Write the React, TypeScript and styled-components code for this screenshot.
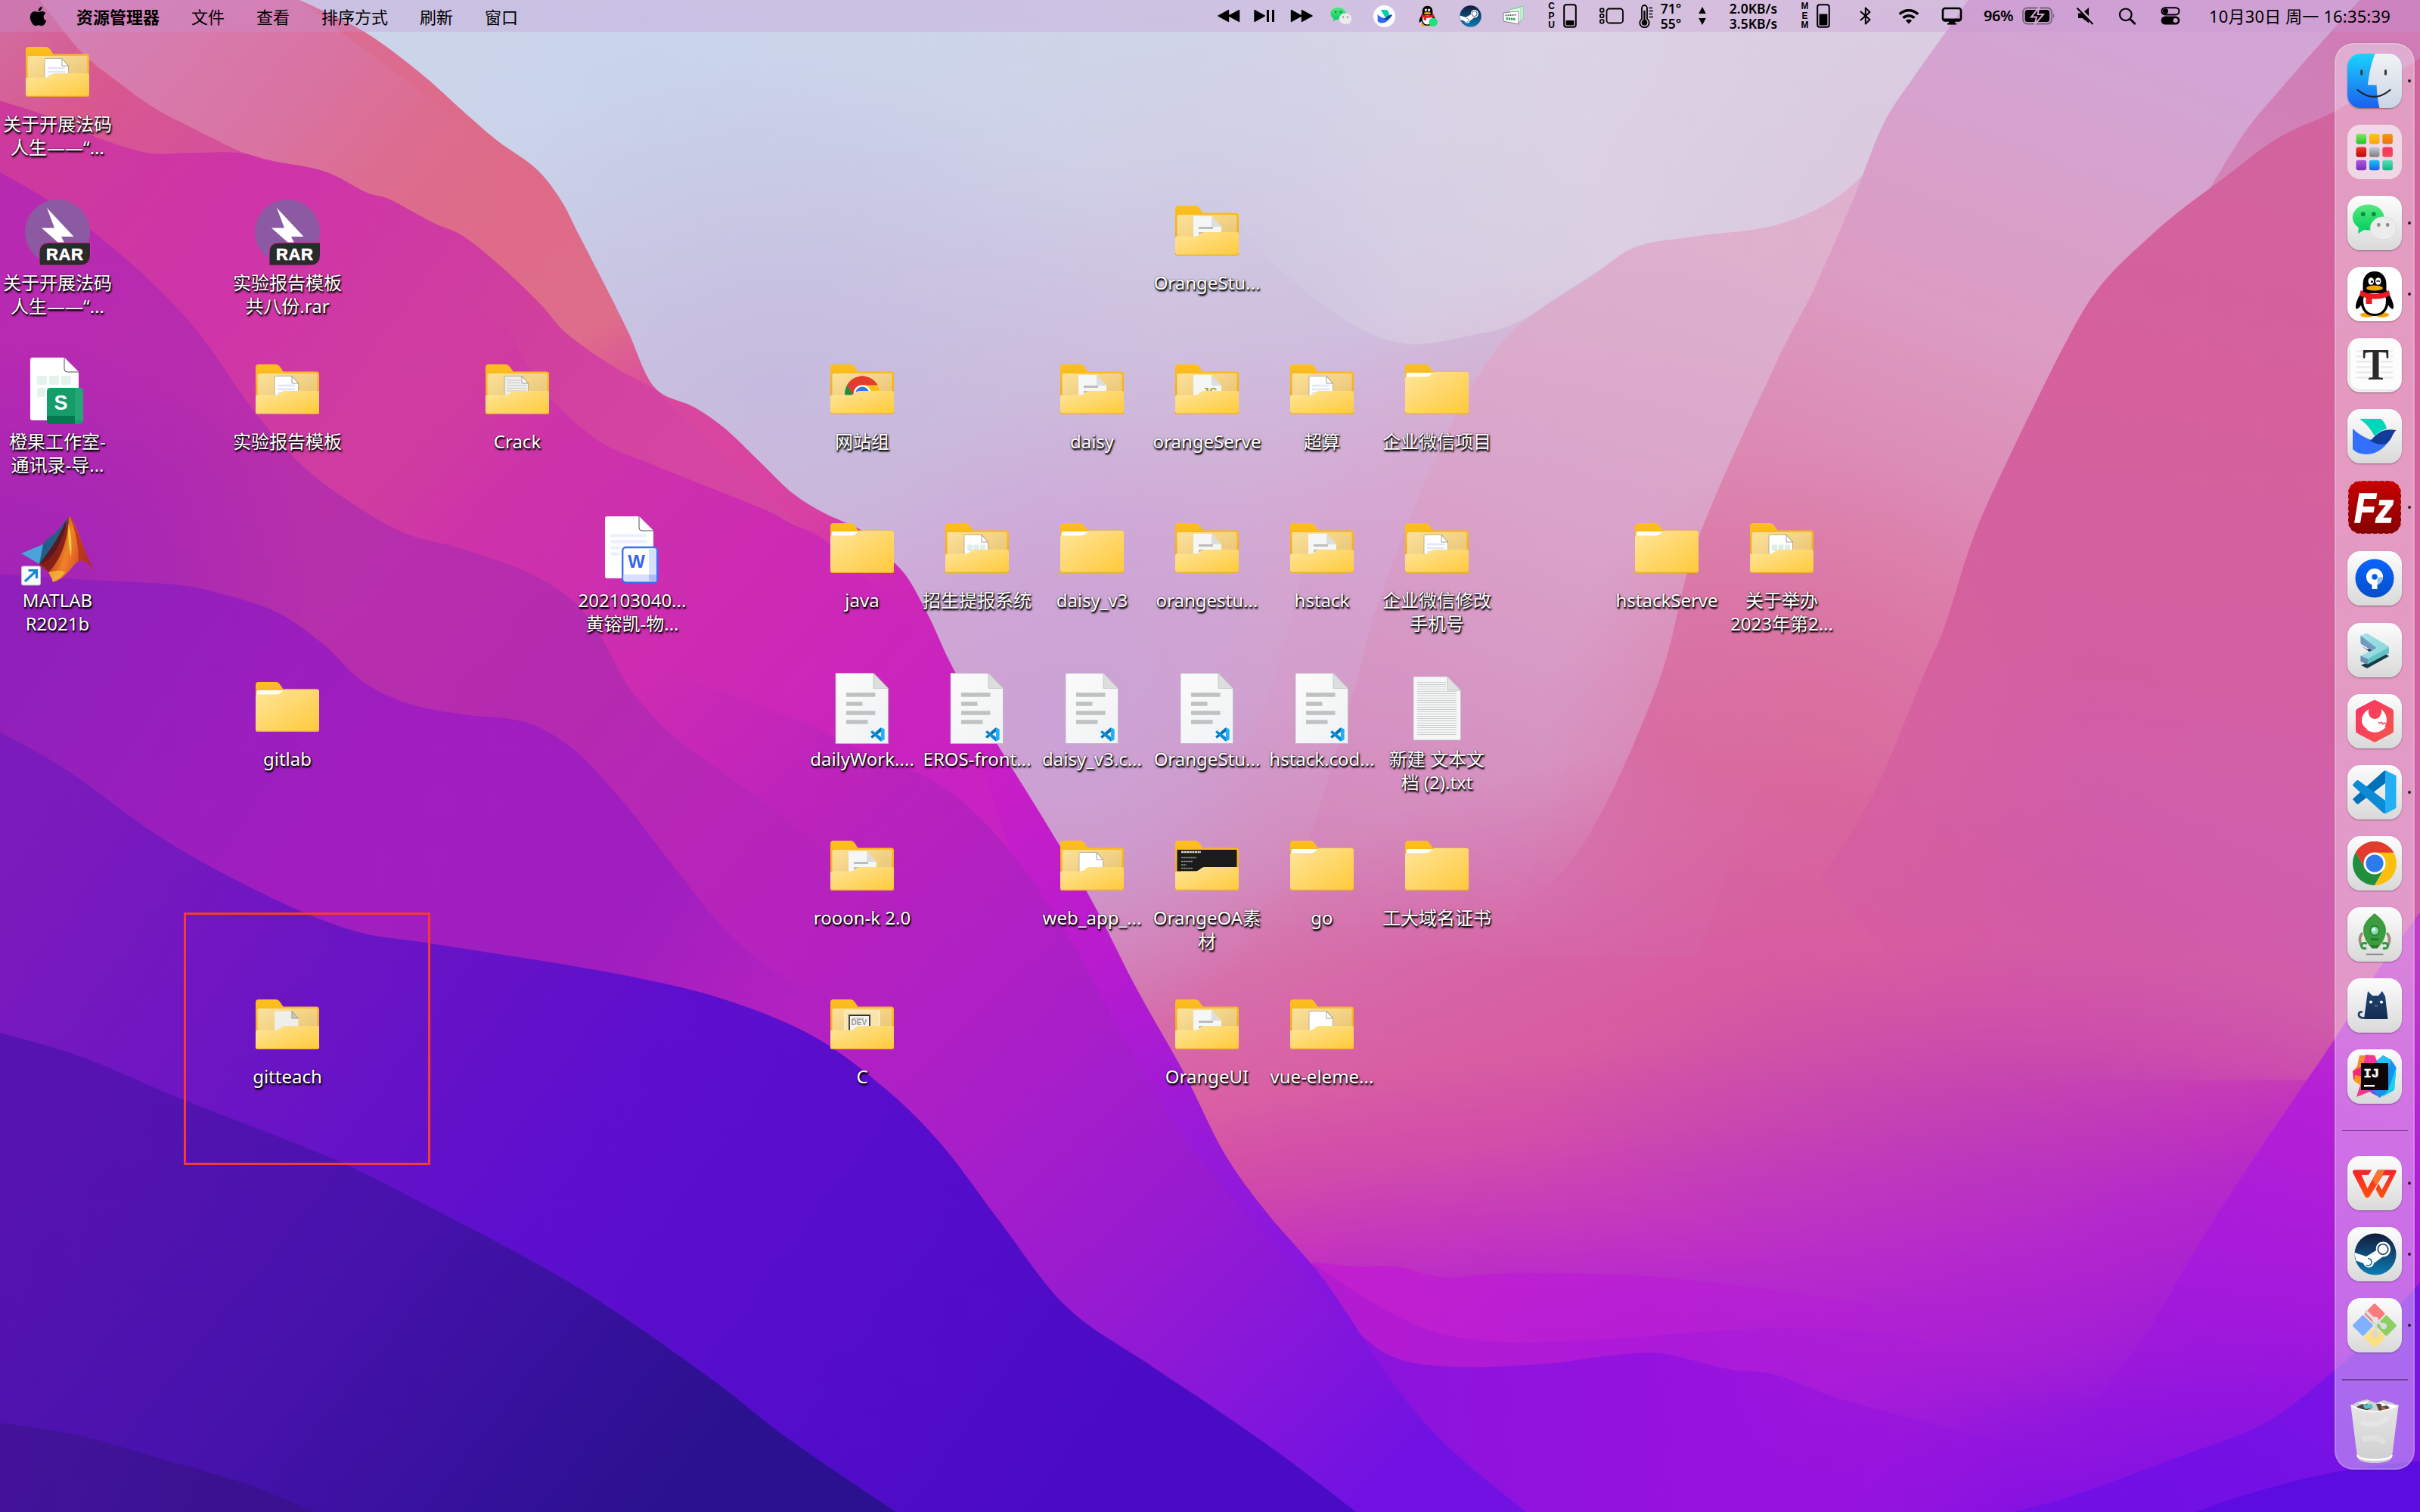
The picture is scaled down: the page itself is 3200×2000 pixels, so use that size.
import React from "react";
import styled, { createGlobalStyle, css } from "styled-components";
import { FaApple } from "react-icons/fa";

/* ------------------------------------------------------------------ */
/* Base                                                                */
/* ------------------------------------------------------------------ */

const uiFont = `"Noto Sans", "Open Sans", "Noto Sans CJK SC", sans-serif`;

const GlobalStyle = createGlobalStyle`
  html, body { margin: 0; padding: 0; background: #5a10c8; }
  body { overflow: hidden; font-family: ${uiFont}; }
  svg { display: block; }
`;

const Screen = styled.div`
  position: relative;
  width: 3200px;
  height: 2000px;
  overflow: hidden;
  display: flex;
  flex-direction: column;
`;

/* ------------------------------------------------------------------ */
/* Wallpaper                                                           */
/* ------------------------------------------------------------------ */

type Pt = [number, number];

/** Catmull-Rom spline through the points, closed by the given tail. */
const ridge = (p: Pt[], tail = "") => {
  let d = `M${p[0][0]},${p[0][1]}`;
  for (let i = 0; i < p.length - 1; i++) {
    const a = p[i - 1] || p[i];
    const b = p[i];
    const c = p[i + 1];
    const e = p[i + 2] || c;
    d += `C${b[0] + (c[0] - a[0]) / 6},${b[1] + (c[1] - a[1]) / 6} ${c[0] - (e[0] - b[0]) / 6},${
      c[1] - (e[1] - b[1]) / 6
    } ${c[0]},${c[1]}`;
  }
  return d + tail + "Z";
};

const WallpaperSvg = styled.svg`
  position: absolute;
  inset: 0;
  width: 100%;
  height: 100%;
`;

type Stop = [number, string, number?];
const Lin = ({ id, v, stops }: { id: string; v: [number, number, number, number]; stops: Stop[] }) => (
  <linearGradient id={id} gradientUnits="userSpaceOnUse" x1={v[0]} y1={v[1]} x2={v[2]} y2={v[3]}>
    {stops.map(([o, c, a], i) => (
      <stop key={i} offset={o} stopColor={c} stopOpacity={a ?? 1} />
    ))}
  </linearGradient>
);
const Glow = ({ id, c, a = 1 }: { id: string; c: string; a?: number }) => (
  <radialGradient id={id}>
    <stop offset="0" stopColor={c} stopOpacity={a} />
    <stop offset=".5" stopColor={c} stopOpacity={a * 0.55} />
    <stop offset="1" stopColor={c} stopOpacity="0" />
  </radialGradient>
);

const massif: Pt[] = [
  [192, -1], [235, 20], [272, 47], [300, 72], [322, 91], [347, 109], [363, 129], [375, 152], [392, 185],
  [407, 215], [424, 251], [450, 264], [470, 278], [492, 299], [514, 320], [533, 332], [546, 338], [560, 345], [571, 357],
  [587, 373], [602, 400], [618, 434], [646, 482], [675, 529], [707, 583], [736, 640], [767, 695], [793, 747],
  [820, 785], [852, 822], [872, 850], [894, 884], [920, 918], [948, 946], [990, 981],
];
const pinkVeil: Pt[] = [[25, -1], [52, 33], [75, 52], [100, 70], [125, 83], [160, 100], [176, 104]];
const hillTwo: Pt[] = [
  [-1, 65], [30, 75], [60, 88], [95, 99], [125, 99], [155, 99], [175, 104], [210, 111], [238, 125], [252, 129],
  [280, 144], [300, 153], [325, 173], [350, 197], [367, 216], [395, 236], [424, 252],
];
const hillThree: Pt[] = [
  [330, 215], [345, 242], [360, 262], [390, 287], [420, 300], [470, 320], [497, 331], [514, 340], [533, 349], [557, 371],
  [580, 390], [600, 415], [618, 438],
];
const hillFour: Pt[] = [
  [-1, 111], [30, 129], [60, 150], [95, 180], [129, 216], [162, 263], [192, 298], [222, 322], [261, 345],
  [300, 356], [342, 371], [372, 390], [390, 414], [408, 446], [435, 476], [470, 502], [510, 532], [560, 575], [620, 640],
];
const hillOuter: Pt[] = [
  [400, 420], [460, 446], [520, 468], [558, 486], [611, 510], [654, 551], [696, 613], [733, 682], [771, 743], [825, 806],
  [860, 844], [892, 884], [920, 919], [948, 947], [990, 981],
];
const hillFive: Pt[] = [
  [-1, 372], [60, 376], [114, 379], [144, 385], [180, 397], [210, 418], [234, 441], [264, 456], [300, 463], [340, 468],
  [372, 486], [404, 520], [436, 561], [473, 606], [510, 634], [560, 652],
];
const hillSix: Pt[] = [
  [-1, 474], [43, 499], [106, 544], [170, 579], [228, 603], [276, 611], [340, 621], [404, 632], [467, 647],
  [526, 671], [574, 706], [611, 743], [648, 792], [691, 847], [744, 884], [786, 912], [833, 945], [880, 981],
];
const hillSeven: Pt[] = [
  [-1, 669], [53, 685], [117, 712], [213, 750], [276, 781], [372, 833], [457, 891], [510, 932], [582, 981],
];
const hillEight: Pt[] = [[-1, 922], [50, 930], [106, 946], [160, 962], [207, 981]];

const slopeC: Pt[] = [
  [1276, -1], [1262, 19], [1240, 50], [1220, 81], [1200, 131], [1175, 188], [1150, 237], [1100, 350], [1075, 441],
  [1032, 537], [990, 590], [953, 633], [920, 700],
];
const slopeD: Pt[] = [
  [1225, 95], [1190, 128], [1150, 146], [1100, 153], [1060, 160], [1030, 180], [985, 210], [960, 240], [938, 280], [912, 340],
  [890, 400], [879, 441], [862, 500], [849, 544], [830, 620],
];
const slopeE: Pt[] = [[965, 235], [900, 262], [870, 310], [848, 360], [825, 441], [805, 490], [788, 537], [770, 600]];
const paleFold: Pt[] = [[740, -1], [760, 60], [800, 140], [850, 192], [905, 222], [960, 216], [985, 208], [1010, 192], [1060, 160]];
const slopeB: Pt[] = [
  [1569, 37], [1540, 56], [1513, 72], [1475, 90], [1440, 116], [1412, 137], [1390, 156], [1362, 184], [1340, 219], [1300, 300],
  [1278, 350], [1260, 406], [1245, 441], [1215, 512], [1180, 570],
];
const slopeTop: Pt[] = [[1530, -1], [1509, 22], [1480, 55], [1455, 85], [1432, 122]];
const rightPurple: Pt[] = [
  [1569, 590], [1540, 630], [1513, 673], [1479, 723], [1447, 771], [1421, 812], [1390, 865], [1340, 930],
];
const rightBlue: Pt[] = [[1569, 830], [1540, 862], [1513, 888], [1468, 922], [1415, 943], [1341, 970], [1300, 981]];
const bandOne: Pt[] = [
  [850, 818], [880, 821], [905, 821], [937, 828], [980, 825], [1065, 827], [1150, 836], [1213, 845], [1300, 850],
];
const bandTwo: Pt[] = [
  [851, 819], [894, 847], [932, 864], [980, 870], [1054, 867], [1139, 861], [1213, 863], [1300, 880],
];
const bandThree: Pt[] = [
  [860, 840], [885, 868], [910, 882], [948, 886], [1001, 884], [1040, 879], [1075, 877], [1118, 887], [1150, 891], [1187, 905],
  [1234, 918], [1300, 935], [1380, 955],
];

const Wallpaper = () => (
  <WallpaperSvg viewBox="0 0 1568 980" preserveAspectRatio="none">
    <defs>
      <Lin id="sky" v={[760, 0, 900, 980]} stops={[
        [0, "#d0d6e9"], [0.1, "#d0cfe6"], [0.22, "#cfc0de"], [0.34, "#d2abd5"], [0.46, "#d19fcc"], [0.56, "#d38abb"], [0.64, "#d670ab"],
        [0.72, "#d95fa4"], [0.77, "#d24ca8"], [0.82, "#c634bb"], [0.87, "#b422d0"], [0.93, "#9a16da"], [1, "#8411e2"],
      ]} />
      <Glow id="gBlue" c="#c8d3ea" a={0.95} />
      <Glow id="gLav" c="#c4b9de" a={0.8} />
      <Glow id="gLilac" c="#cba3d8" a={0.9} />
      <Glow id="gRose" c="#dda0c6" a={0.75} />
      <Glow id="gPink" c="#d6599f" a={0.85} />
      <Glow id="gCoral" c="#dc6896" a={0.6} />
      <Glow id="gMag" c="#b828cf" a={0.7} />
      <Glow id="gHot" c="#d04cae" a={0.7} />
      <Glow id="gOrchid" c="#b332c2" a={0.6} />
      <Glow id="gDusk" c="#9c21b9" a={0.75} />
      <Lin id="pale" v={[770, 120, 1200, 60]} stops={[[0, "#d6d2e6", 0], [0.3, "#dcd6e6", 0.55], [0.6, "#dfd4e3", 0.75], [1, "#dfcbdf", 0.7]]} />
      <Lin id="lC" v={[1290, 0, 1060, 620]} stops={[
        [0, "#d3a5d4"], [0.3, "#dc9cc3"], [0.55, "#dc83af"], [0.8, "#d669a3", 0.9], [1, "#d45da4", 0],
      ]} />
      <Lin id="lD" v={[1080, 150, 860, 640]} stops={[
        [0, "#dfafcc", 0.95], [0.35, "#dba3c9", 0.75], [0.75, "#d587bb", 0.5], [1, "#d66cab", 0],
      ]} />
      <Lin id="lE" v={[930, 240, 800, 600]} stops={[[0, "#d8b4d6", 0], [0.4, "#d49fcf", 0.6], [1, "#d48cbd", 0]]} />
      <Lin id="lTop" v={[1500, 0, 1450, 120]} stops={[[0, "#cf7bb6"], [1, "#d27db2", 0.8]]} />
      <Lin id="lB" v={[1480, 60, 1380, 680]} stops={[
        [0, "#d2649f"], [0.3, "#d5609c"], [0.6, "#d25b9f", 0.9], [0.85, "#c94cb2", 0.5], [1, "#c040c0", 0],
      ]} />
      <Lin id="rP" v={[1540, 610, 1420, 950]} stops={[[0, "#c23bc8"], [0.3, "#b51fd6"], [0.7, "#a318dd", 0.85], [1, "#8f12e0", 0.2]]} />
      <Lin id="rB" v={[1540, 850, 1420, 990]} stops={[[0, "#7c14e4"], [1, "#6f0fe6", 0.85]]} />
      <Lin id="b1" v={[850, 0, 1300, 0]} stops={[[0, "#c21fce"], [0.5, "#b91cd6", 0.7], [1, "#b01bd8", 0]]} />
      <Lin id="b2" v={[850, 0, 1300, 0]} stops={[[0, "#b31bd0"], [0.5, "#a818da", 0.7], [1, "#a018dc", 0]]} />
      <Lin id="b3" v={[860, 0, 1380, 0]} stops={[[0, "#8a14dc"], [0.4, "#9512de"], [1, "#8f10e0", 0]]} />
      <Lin id="m1" v={[230, 0, 800, 930]} stops={[
        [0, "#db6c92"], [0.12, "#dd6a88"], [0.24, "#de6d8a"], [0.3, "#d9479f"], [0.4, "#d841a2"], [0.46, "#cd28b6"], [0.58, "#c91fc6"],
        [0.72, "#b81bcf"], [0.84, "#981ad8"], [1, "#7e14e0"],
      ]} />
      <Lin id="m2" v={[20, 60, 420, 340]} stops={[[0, "#cd3a9c"], [0.35, "#ce34a8"], [0.7, "#d03f9e"], [1, "#d545a2"]]} />
      <Lin id="m2b" v={[290, 190, 620, 480]} stops={[[0, "#d03aa0", 0], [0.25, "#cd33a9"], [0.6, "#cd2bb2"], [1, "#c922c2"]]} />
      <Lin id="mOut" v={[440, 420, 920, 930]} stops={[
        [0, "#c127b6", 0], [0.2, "#bb23bb"], [0.45, "#ad1fc6"], [0.7, "#981bd1"], [0.9, "#8015dd"], [1, "#7212e2"],
      ]} />
      <Lin id="m4" v={[40, 130, 600, 620]} stops={[
        [0, "#b829b2"], [0.35, "#b730aa"], [0.62, "#b42ab0"], [0.8, "#b325b8", 0.7], [0.95, "#ae20c2", 0],
      ]} />
      <Lin id="m5" v={[60, 380, 520, 680]} stops={[[0, "#9120bb"], [0.4, "#a11dbf"], [0.75, "#9d1dc0", 0.9], [1, "#a41cc6", 0]]} />
      <Lin id="m6" v={[40, 500, 700, 980]} stops={[[0, "#7c1bbc"], [0.28, "#6a14c4"], [0.5, "#5e0fcd"], [0.75, "#550dcb"], [1, "#4a0bc4"]]} />
      <Lin id="m7" v={[60, 690, 420, 980]} stops={[[0, "#5713b2"], [0.45, "#4812ad"], [0.8, "#35119b"], [1, "#2b118f"]]} />
      <Lin id="m8" v={[20, 930, 150, 980]} stops={[[0, "#42139a"], [1, "#3a1190"]]} />
      <Lin id="veil" v={[60, 10, 300, 200]} stops={[[0, "#d57fb3"], [0.45, "#d973a2"], [0.75, "#dd6e92", 0.4], [1, "#de6c8e", 0]]} />
      <Lin id="veilLow" v={[10, 10, 130, 130]} stops={[[0, "#d26b9f"], [0.4, "#d8588f"], [1, "#d5509c"]]} />
    </defs>

    <rect width="1568" height="980" fill="url(#sky)" />
    <ellipse cx="420" cy="60" rx="330" ry="230" fill="url(#gBlue)" />
    <ellipse cx="500" cy="250" rx="260" ry="210" fill="url(#gLav)" />
    <ellipse cx="690" cy="470" rx="170" ry="210" fill="url(#gLilac)" />
    <path d={ridge(paleFold, "L1200,200L1290,-1")} fill="url(#pale)" />
    <ellipse cx="1030" cy="400" rx="240" ry="230" fill="url(#gRose)" />
    <path d={ridge(slopeE, "L980,600L1100,235")} fill="url(#lE)" />
    <path d={ridge(slopeD, "L1100,620L1250,200")} fill="url(#lD)" />
    <path d={ridge(slopeC, "L1568,700L1568,-1")} fill="url(#lC)" />
    <path d={ridge(slopeTop, "L1568,150L1568,-1")} fill="url(#lTop)" />
    <path d={ridge(slopeB, "L1300,700L1568,700")} fill="url(#lB)" />
    <ellipse cx="1180" cy="500" rx="180" ry="210" fill="url(#gCoral)" />
    <ellipse cx="1150" cy="650" rx="360" ry="170" fill="url(#gPink)" />
    <ellipse cx="1060" cy="770" rx="320" ry="90" fill="url(#gHot)" />
    <ellipse cx="1300" cy="760" rx="320" ry="150" fill="url(#gOrchid)" />
    <ellipse cx="1150" cy="860" rx="420" ry="130" fill="url(#gMag)" />
    <path d={ridge(rightPurple, "L1568,981")} fill="url(#rP)" />
    <path d={ridge(bandOne, "L1300,981L850,981")} fill="url(#b1)" />
    <path d={ridge(bandTwo, "L1300,981L850,981")} fill="url(#b2)" />
    <path d={ridge(bandThree, "L1380,981L860,981")} fill="url(#b3)" />
    <path d={ridge(rightBlue, "L1568,981")} fill="url(#rB)" />
    <path d="M1420,981 C1470,962 1520,950 1569,947 V981Z" fill="#5c0be0" />

    <path d={ridge(massif, "L-1,981L-1,-1")} fill="url(#m1)" />
    <path d={ridge(pinkVeil, "L300,200L-1,200L-1,-1")} fill="url(#veilLow)" />
    <path d={ridge(pinkVeil, "C210,112 238,126 280,144 L330,170 C350,150 340,120 300,80 L192,-1")} fill="url(#veil)" />
    <path d={ridge(hillTwo, "L618,438L500,600L-1,600")} fill="url(#m2)" />
    <path d={ridge(hillThree, "L654,551L400,600L-1,600L-1,140L230,140")} fill="url(#m2b)" />
    <path d={ridge(hillOuter, "L300,981")} fill="url(#mOut)" />
    <path d={ridge(hillFour, "L620,981L-1,981")} fill="url(#m4)" />
    <ellipse cx="20" cy="370" rx="190" ry="150" fill="url(#gDusk)" />
    <path d={ridge(hillFive, "L600,981L-1,981")} fill="url(#m5)" />
    <path d={ridge(hillSix, "L-1,981")} fill="url(#m6)" />
    <path d={ridge(hillSeven, "L-1,981")} fill="url(#m7)" />
    <path d={ridge(hillEight, "L-1,981")} fill="url(#m8)" />
  </WallpaperSvg>
);

/* ------------------------------------------------------------------ */
/* Menu bar                                                            */
/* ------------------------------------------------------------------ */

const Bar = styled.header`
  position: relative;
  display: flex;
  align-items: center;
  flex: none;
  height: 42px;
  padding: 0 38.5px 0 36px;
  background: rgba(200, 150, 212, 0.3);
  color: #000;
  font-size: 22px;
  line-height: 42px;
  white-space: nowrap;
`;

const Menus = styled.nav`
  display: flex;
  gap: 42px;
  margin-left: 36px;
  flex: 1;
`;

const MenuItem = styled.span<{ $bold?: boolean }>`
  font-family: "Noto Sans CJK SC", sans-serif;
  font-weight: ${(p) => (p.$bold ? 700 : 400)};
`;

const Status = styled.div`
  display: flex;
  align-items: center;
  height: 42px;
`;

const Slot = styled.div<{ $w: number; $ml: number }>`
  display: flex;
  align-items: center;
  justify-content: center;
  flex: none;
  width: ${(p) => p.$w}px;
  margin-left: ${(p) => p.$ml}px;
`;

const Stack = styled.div<{ $tight?: boolean }>`
  display: flex;
  flex-direction: column;
  align-items: center;
  font-weight: 600;
  font-size: 17.5px;
  line-height: 20px;
  ${(p) =>
    p.$tight &&
    css`
      font-family: "Liberation Sans", sans-serif;
      font-weight: 700;
      font-size: 12px;
      line-height: 12.4px;
    `}
`;

const Percent = styled.span`
  font-size: 20px;
  font-weight: 600;
  letter-spacing: -0.5px;
`;

const Clock = styled.time`
  font-size: 22px;
  letter-spacing: 0.15px;
  white-space: pre;
`;

const Gauge = ({ level }: { level: number }) => (
  <svg width="18" height="32" viewBox="0 0 18 32">
    <rect x="1.2" y="1.2" width="15.6" height="29.6" rx="3" fill="none" stroke="#000" strokeWidth="2" />
    <rect x="3.6" y={28.4 - level} width="10.8" height={level} rx="1.2" />
  </svg>
);

const MiniSteam = () => (
  <svg width="29" height="29" viewBox="8 8 56 56">
    <SteamMark />
  </svg>
);

const StatusArea = () => (
  <Status>
    <Slot $w={30} $ml={0}>
      <svg width="30" height="18" viewBox="0 0 30 18"><path d="M14.500,1.500V16.500L.8,9ZM28.500,1.500V16.500L14.800,9Z" stroke="#000" strokeWidth="1.400" strokeLinejoin="round" /></svg>
    </Slot>
    <Slot $w={28} $ml={18}>
      <svg width="28" height="18" viewBox="0 0 28 18"><path d="M1,1.500V16.500L14.500,9Z" stroke="#000" strokeWidth="1.400" strokeLinejoin="round" /><path d="M18.500,1V17M25.500,1V17" stroke="#000" strokeWidth="3" /></svg>
    </Slot>
    <Slot $w={30} $ml={20}>
      <svg width="30" height="18" viewBox="0 0 30 18"><path d="M1.500,1.500V16.500L15.200,9ZM15.500,1.500V16.500L29.200,9Z" stroke="#000" strokeWidth="1.400" strokeLinejoin="round" /></svg>
    </Slot>
    <Slot $w={29} $ml={23}>
      <svg width="31" height="28" viewBox="6 10 60 50"><WechatMark /></svg>
    </Slot>
    <Slot $w={29} $ml={28}>
      <svg width="29" height="29" viewBox="0 0 72 72">
        <circle cx="36" cy="36" r="36" fill="#fff" />
        <path d="M24,15H44Q52,22 53,34L40,41Z" fill="#00cfae" />
        <path d="M14,30C24,41 36,44 46,40L60,28C54,56 26,66 14,52Z" fill="#2f6bfa" />
        <path d="M35,45C46,38 50,30 62,32C54,44 48,50 35,45Z" fill="#133c9a" />
      </svg>
    </Slot>
    <Slot $w={28} $ml={29}>
      <svg width="28" height="30" viewBox="8 2 58 68"><QQMark /><circle cx="53" cy="55" r="13" fill="#1fe07d" /></svg>
    </Slot>
    <Slot $w={29} $ml={28}><MiniSteam /></Slot>
    <Slot $w={28} $ml={28}>
      <svg width="28" height="28" viewBox="0 0 28 28">
        <path d="M14,4 27,1V18L20,22Z" fill="#e8fbef" stroke="#79cf97" />
        <path d="M8,6 24,3V21L18,24Z" fill="#effcf3" stroke="#79cf97" />
        <path d="M1,10 21,7.500V25L1,21Z" fill="#fff" stroke="#666" strokeWidth=".8" />
        <path d="M3.500,13.500 18.500,12.500" stroke="#666" strokeWidth="2" strokeDasharray="2 1" />
        <path d="M4.500,17.500 16.500,18.500" stroke="#2daa58" strokeWidth="3" strokeDasharray="2.500 .7" />
      </svg>
    </Slot>
    <Slot $w={12} $ml={31}><Stack $tight><span>C</span><span>P</span><span>U</span></Stack></Slot>
    <Slot $w={18} $ml={9}><Gauge level={6.5} /></Slot>
    <Slot $w={32} $ml={30}>
      <svg width="32" height="22" viewBox="0 0 32 22" fill="none" stroke="#000" strokeWidth="1.800">
        <rect x="9.500" y="1.500" width="21.500" height="19" rx="3.500" />
        <rect x="1" y="1.400" width="4.600" height="4.400" rx="1.200" /><rect x="1" y="8.800" width="4.600" height="4.400" rx="1.200" /><rect x="1" y="16.200" width="4.600" height="4.400" rx="1.200" />
      </svg>
    </Slot>
    <Slot $w={20} $ml={20}>
      <svg width="20" height="31" viewBox="0 0 20 31" fill="none" stroke="#000" strokeWidth="1.800">
        <path d="M4,19V4.500a3.500,3.500 0 0 1 7,0V19a6.200,6.200 0 1 1 -7,0Z" />
        <circle cx="7.500" cy="24" r="3.800" fill="#000" stroke="none" /><path d="M7.500,8V24" strokeWidth="2.400" />
        <path d="M13.500,4.500H18M13.500,8.500H19M13.500,12.500H18M13.500,16.500H19" strokeWidth="1.500" />
      </svg>
    </Slot>
    <Slot $w={30} $ml={8}><Stack><span>71°</span><span>55°</span></Stack></Slot>
    <Slot $w={12} $ml={20}>
      <svg width="12" height="24" viewBox="0 0 12 24"><path d="M6,0 10.800,9H1.200ZM6,24 10.800,15H1.200Z" /></svg>
    </Slot>
    <Slot $w={68} $ml={28}><Stack><span>2.0KB/s</span><span>3.5KB/s</span></Stack></Slot>
    <Slot $w={12} $ml={28}><Stack $tight><span>M</span><span>E</span><span>M</span></Stack></Slot>
    <Slot $w={18} $ml={9}><Gauge level={15} /></Slot>
    <Slot $w={18} $ml={38}>
      <svg width="18" height="24" viewBox="0 0 18 24" fill="none" stroke="#000" strokeWidth="2" strokeLinejoin="round" strokeLinecap="round">
        <path d="M2.500,6.500 14.500,17 8.800,22.500V1.500L14.500,7 2.500,17.500" />
      </svg>
    </Slot>
    <Slot $w={28} $ml={34}>
      <svg width="28" height="21" viewBox="0 0 28 21" fill="none" stroke="#000" strokeWidth="3.600">
        <path d="M1.800,7.800a17.300,17.300 0 0 1 24.400,0" /><path d="M6.600,12.800a10.500,10.500 0 0 1 14.800,0" />
        <path d="M14,20.500 9.800,16.200a6,6 0 0 1 8.400,0Z" fill="#000" stroke="none" />
      </svg>
    </Slot>
    <Slot $w={28} $ml={29}>
      <svg width="28" height="24" viewBox="0 0 28 24">
        <rect x="2" y="2" width="24" height="16.500" rx="3" fill="none" stroke="#000" strokeWidth="2.600" /><path d="M2,15.500H26V17q0,2-2,2H4q-2,0-2-2ZM10.500,19H17.500L18.500,22H9.500Z" /><path d="M8,22.600H20" stroke="#000" strokeWidth="2" />
      </svg>
    </Slot>
    <Slot $w={42} $ml={27}><Percent>96%</Percent></Slot>
    <Slot $w={44} $ml={10}>
      <svg width="44" height="24" viewBox="0 0 44 24">
        <rect x="1" y="1.500" width="38" height="21" rx="5.500" fill="none" stroke="#000" strokeOpacity=".4" strokeWidth="1.800" />
        <rect x="3.600" y="4" width="32.500" height="16" rx="3.500" /><path d="M41,8.500q3,3.500 0,7Z" fillOpacity=".4" />
        <path d="M22.500,.5 12,13.500H19L16.500,23.500 28,10H20.500Z" stroke="#d6a8d4" strokeWidth="2" />
      </svg>
    </Slot>
    <Slot $w={26} $ml={27}>
      <svg width="26" height="24" viewBox="0 0 26 24">
        <path d="M3,8.500H8.500L17,1V21.500L8.500,15H3Z" /><path d="M2,.5 24,22" stroke="#d2a6d4" strokeWidth="4.500" /><path d="M1.500,1.500 22.500,23" stroke="#000" strokeWidth="2" />
      </svg>
    </Slot>
    <Slot $w={24} $ml={30}>
      <svg width="24" height="23" viewBox="0 0 24 23" fill="none" stroke="#000" strokeLinecap="round">
        <circle cx="9.800" cy="9.300" r="7.800" strokeWidth="2.200" /><path d="M15.500,15 21.800,21.300" strokeWidth="2.800" />
      </svg>
    </Slot>
    <Slot $w={26} $ml={32}>
      <svg width="26" height="24" viewBox="0 0 26 24">
        <rect x="1.500" y="1.200" width="23" height="9.200" rx="4.600" fill="none" stroke="#000" strokeWidth="2" /><circle cx="6.500" cy="5.800" r="3.600" />
        <rect x=".6" y="12.600" width="24.800" height="11" rx="5.500" /><circle cx="19.700" cy="18.100" r="3" fill="#d5a4d3" />
      </svg>
    </Slot>
    <Slot $w={241} $ml={38}><Clock>10月30日 周一 16:35:39</Clock></Slot>
  </Status>
);

/* ------------------------------------------------------------------ */
/* Desktop icons                                                       */
/* ------------------------------------------------------------------ */

const Grid = styled.main`
  position: relative;
  display: grid;
  grid-template-columns: repeat(20, 152px);
  grid-template-rows: repeat(9, 210px);
  flex: none;
`;

const Cell = styled.div<{ $c: number; $r: number }>`
  grid-column: ${(p) => p.$c + 1};
  grid-row: ${(p) => p.$r + 1};
  display: flex;
  flex-direction: column;
  align-items: center;
  padding-top: 5px;
`;

const Art = styled.svg`
  width: 96px;
  height: 96px;
  overflow: visible;
`;

const Label = styled.div`
  margin-top: 5px;
  color: #fff;
  font-size: 24px;
  line-height: 31px;
  text-align: center;
  white-space: nowrap;
  text-shadow: 1px 2px 2px rgba(0, 0, 0, 0.95), 1px 2px 3px rgba(0, 0, 0, 0.8), 0 0 2px rgba(0, 0, 0, 0.6);
  span { display: block; }
`;

const SelectionFrame = styled.div`
  position: absolute;
  left: 243px;
  top: 1207px;
  width: 320px;
  height: 328px;
  border: 3px solid #f53b32;
`;

type Inner = "lines" | "code" | "js" | "page" | "txt" | "sheet" | "chrome" | "dark" | "dev" | "fold";

const VsMark = () => (
  <>
    <path d="M7,45 12,51Q13.500,52 15,51L50,24V7.500L48,8 8,44Z" fill="#0071b8" />
    <path d="M7,26 12,20.500Q13.500,19.500 15,20.500L50,47V64L47,63 8,28Z" fill="#0b8bd6" />
    <path d="M50,7 64.500,14V57L50,64.500Z" fill="#24aef4" />
  </>
);

const ChromeMark = () => (
  <>
    <path d="M36,36 10.900,21.500A29,29 0 0 1 61.100,21.500Z" fill="#e33b2e" />
    <path d="M10.900,21.500A29,29 0 0 0 36,65L48.500,43.200H23.500Z" fill="#1f8f3e" />
    <path d="M61.100,21.500A29,29 0 0 1 36,65L48.500,43.200 36,21.500Z" fill="#fcbf10" />
    <path d="M10.900,21.500 23.500,43.200 36,36V21.500Z" fill="#1f8f3e" />
    <path d="M10.900,21.500A29,29 0 0 1 61.100,21.500H36L23.500,28.800 22,40.500Z" fill="#e33b2e" />
    <circle cx="36" cy="36" r="14.500" fill="#fff" /><circle cx="36" cy="36" r="11.600" fill="#2c7aec" />
  </>
);

const FolderInner = ({ kind }: { kind: Inner }) => {
  switch (kind) {
    case "chrome":
      return <g transform="translate(19.500,25) scale(.8)"><ChromeMark /></g>;
    case "dark":
      return (
        <>
          <path d="M8.500,27H87.500V60H8.500Z" fill="#1b1b1b" />
          <path d="M14,30H40" stroke="#ddd" strokeWidth="2.500" strokeDasharray="3 .6" />
          <path d="M14,37.500H34M14,42.500H29M14,47H21M14,51.500H29M14,56H36" stroke="#999" strokeWidth="1.600" strokeDasharray="2.400 .7" />
        </>
      );
    case "dev":
      return (
        <>
          <path d="M25,30H71V60H25Z" fill="#f8e5ad" stroke="#fff8de" strokeWidth="1" />
          <path d="M31,36H58V60H31Z" fill="#f6f4ee" stroke="#333" strokeWidth="1.800" />
          <text x="33.500" y="49" fontSize="10" fontWeight="700" fontFamily="Liberation Sans, sans-serif" fill="#999">DEV</text>
          <path d="M35,40H50M40,52H50" stroke="#aaa" />
        </>
      );
    case "sheet":
    case "lines":
    case "txt":
    case "page":
    case "fold":
      return (
        <>
          <path d="M31,31.500Q31,30.500 32,30.500H54L62.500,40V60H31Z" fill={kind === "txt" || kind === "fold" ? "#eeeeea" : "#fff"} stroke={kind === "fold" ? "none" : "#a9a08c"} strokeWidth=".8" />
          <path d="M54,30.500V40H62.500Z" fill={kind === "fold" ? "#c9c9c9" : "#fff"} stroke="#8d8675" strokeWidth=".8" />
          {kind === "lines" && <path d="M35,43H58M35,48H58M35,53H53" stroke="#dfe5fa" strokeWidth="2.600" />}
          {kind === "txt" && <path d="M34,36H52M34,39.500H52M34,43H60M34,46.500H60M34,50H60" stroke="#c6c6c2" strokeWidth="1.200" />}
          {kind === "sheet" && <path d="M35,43.500H42V52H35ZM43.500,43.500H50.500V52H43.500ZM52,43.500H59V52H52Z" fill="#dcefe8" />}
        </>
      );
    case "code":
    case "js":
      return (
        <>
          <path d="M30,29H54L67,43V60H30Z" fill="#f5f6f6" />
          <path d="M54,29V43H67Z" fill="#dcdddd" />
          {kind === "code" ? (
            <path d="M37,44.500H56M37,51.500H47" stroke="#bdbdbd" strokeWidth="3" />
          ) : (
            <text x="42" y="58" fontSize="16" fontWeight="700" fontFamily="Liberation Sans, sans-serif" fill="#a6a832">JS</text>
          )}
        </>
      );
  }
};

const Folder = ({ inner }: { inner?: Inner }) => (
  <Art viewBox="0 0 96 96">
    <path d="M6,19Q6,15 10,15H33Q36,15 38,18L42.500,24.500H86.500Q90,24.500 90,28V60H6Z" fill="url(#fTab)" />
    {inner ? (
      <>
        <path d="M8.500,29Q8.500,27 10.500,27H85.500Q87.500,27 87.500,29V62H8.500Z" fill="url(#fBack)" />
        <FolderInner kind={inner} />
        <path d="M6,58Q6,55.500 8.500,55.500H32Q35,55.500 37,54L41,51Q43,50 45,50H87.500Q90,50 90,52.500V78Q90,81 87,81H9Q6,81 6,78Z" fill="url(#fFront)" />
      </>
    ) : (
      <>
        <path d="M7.500,36V28Q7.500,26 10,26H45L38,33Z" fill="#fffdf5" />
        <path d="M6,34Q6,31.500 8.500,31.500H33Q37,31.500 39,29.500L43,26Q44,25 46,25H87Q90,25 90,28V78Q90,81 87,81H9Q6,81 6,78Z" fill="url(#fFront)" />
      </>
    )}
    <path d="M6.200,78Q6.400,80.400 9,80.400H87Q89.600,80.400 89.800,78" fill="none" stroke="#e9ad2b" strokeWidth="1.200" />
  </Art>
);

const Rar = () => (
  <Art viewBox="0 0 96 96">
    <circle cx="48" cy="50" r="43" fill="#8b5aa2" />
    <path d="M34,18 69.500,56H53L60,70H48L41,66 49,64 27,44.500H44Z" fill="#fff" />
    <path d="M24,94V77Q24,64 37,64H91.500V80Q91.500,94 78,94Z" fill="#2b2b2b" stroke="#d62fa6" strokeWidth="1" />
    <text x="57.500" y="87" textAnchor="middle" textLength="49" fontSize="22" fontWeight="700" fontFamily="Liberation Sans, sans-serif" fill="#fff" stroke="#fff" strokeWidth=".6">RAR</text>
  </Art>
);

const OfficeSheet = () => (
  <Art viewBox="0 0 96 96">
    <path d="M12,9Q12,6 15,6H57L76,25V86Q76,89 73,89H15Q12,89 12,86Z" fill="#fff" />
    <path d="M57,6V21Q57,25 61,25H76" fill="#fff" stroke="#555" strokeWidth="1" />
    <g fill="#e3f3ec"><rect x="21" y="30" width="13" height="12" rx="2" /><rect x="37" y="30" width="13" height="12" rx="2" /><rect x="53" y="30" width="13" height="12" rx="2" /><rect x="21" y="46" width="11" height="12" rx="2" /></g>
    <rect x="34" y="46" width="48" height="48" rx="4.500" fill="#159c6b" />
    <path d="M71,46h6.500q4.500,0 4.500,4.500V89H71Z" fill="#25a775" /><path d="M34,83H71V94H38.500Q34,94 34,89.500Z" fill="#03794f" />
    <text x="52.500" y="75" textAnchor="middle" fontSize="27" fontWeight="700" fontFamily="Liberation Sans, sans-serif" fill="#fff">S</text>
  </Art>
);

const OfficeDoc = () => (
  <Art viewBox="0 0 96 96">
    <path d="M12,9Q12,6 15,6H57L76,25V85Q76,88 73,88H15Q12,88 12,85Z" fill="#fff" />
    <path d="M57,6V21Q57,25 61,25H76" fill="#fff" stroke="#555" strokeWidth="1" />
    <path d="M21,31.500H66M21,39.500H66M21,47.500H31M21,55.500H30" stroke="#eaf0fe" strokeWidth="4" strokeLinecap="round" />
    <rect x="35.200" y="47" width="46" height="46.500" rx="4.500" fill="#fff" stroke="#3f6cf8" strokeWidth="2.400" />
    <path d="M70,48.200h6.500q3.500,0 3.500,3.500V92.300H40q-3.500,0-3.500-3.500V83H70Z" fill="#d7e0fd" /><path d="M70,83H80V92.300H73q-3,0-3-4Z" fill="#a9bdfb" />
    <text x="53.500" y="74" textAnchor="middle" fontSize="24" fontWeight="700" fontFamily="Liberation Sans, sans-serif" fill="#3464f4">W</text>
  </Art>
);

const Matlab = () => (
  <Art viewBox="0 0 96 96">
    <path d="M0,55 29,43 38,58 24,69Z" fill="#4aa3db" />
    <path d="M29,43Q36,33 44,30Q54,18 62,7Q56,42 38,66 28,62 24,69 38,56Z" fill="#225f86" />
    <path d="M38,50Q52,30 60,10L54,60 34,78 24,69Z" fill="#5c1720" />
    <path d="M63,6C72,10 82,50 96,78Q84,58 72,68C62,80 54,90 42,93Q38,78 24,69C44,66 56,36 63,6Z" fill="url(#matlab)" />
    <path d="M24,69C44,66 56,36 63,6C62,36 54,62 36,80Q32,72 24,69Z" fill="#7a1713" opacity=".85" />
    <path d="M36,80C44,78 50,76 58,80Q50,90 42,93Q40,86 36,80Z" fill="#f5bd3c" opacity=".75" />
    <path d="M65,8C72,14 82,50 96,78Q84,60 76,66Q76,34 65,8Z" fill="#b5301d" opacity=".8" />
    <path d="M62.500,16Q68,34 66,60Q61,40 62.500,16Z" fill="#fbd93f" opacity=".85" />
    <rect x=".5" y="72" width="25" height="25" rx="2" fill="#fafafa" stroke="#b9c4cc" />
    <path d="M5,92 19,79M9.500,77.500H20.500V88" fill="none" stroke="#1487d9" strokeWidth="3.200" />
  </Art>
);

const CodeFile = () => (
  <Art viewBox="0 0 96 96">
    <path d="M13,3.500H63L82.500,23.500V96.500H13Z" fill="url(#paper)" stroke="#b9b5bd" strokeWidth=".8" />
    <path d="M63,3.500V23.500H82.500Z" fill="#dcdddd" stroke="#c2c2c2" strokeWidth=".8" />
    <path d="M27,32H65.500M27,44H48.500M27,56H65.500M27,68H55.500" stroke="#c0c1c2" strokeWidth="5.400" />
    <g transform="translate(57,73) scale(.32)"><VsMark /></g>
  </Art>
);

const TextFile = () => (
  <Art viewBox="0 0 96 96">
    <path d="M17,8H62L79.500,26V92H17Z" fill="#f6f7f7" stroke="#bdbac0" strokeWidth=".8" />
    <path d="M62,8V26H79.500Z" fill="#e2e2e2" stroke="#b8b8b8" strokeWidth=".8" />
    <path d="M22,15.500H60M22,18.500H60M22,21.500H60M22,24.500H60" stroke="#c9caca" strokeWidth="1" />
    {Array.from({ length: 20 }, (_, i) => (
      <path key={i} d={`M22,${27.5 + i * 3}H74`} stroke="#c9caca" strokeWidth="1" />
    ))}
  </Art>
);

type Entry = { c: number; r: number; label: string[]; art: React.ReactNode };

const entries: Entry[] = [
  { c: 0, r: 0, label: ["关于开展法码", "人生——“..."], art: <Folder inner="lines" /> },
  { c: 0, r: 1, label: ["关于开展法码", "人生——“..."], art: <Rar /> },
  { c: 2, r: 1, label: ["实验报告模板", "共八份.rar"], art: <Rar /> },
  { c: 10, r: 1, label: ["OrangeStu..."], art: <Folder inner="code" /> },
  { c: 0, r: 2, label: ["橙果工作室-", "通讯录-导..."], art: <OfficeSheet /> },
  { c: 2, r: 2, label: ["实验报告模板"], art: <Folder inner="lines" /> },
  { c: 4, r: 2, label: ["Crack"], art: <Folder inner="txt" /> },
  { c: 7, r: 2, label: ["网站组"], art: <Folder inner="chrome" /> },
  { c: 9, r: 2, label: ["daisy"], art: <Folder inner="code" /> },
  { c: 10, r: 2, label: ["orangeServe"], art: <Folder inner="js" /> },
  { c: 11, r: 2, label: ["超算"], art: <Folder inner="lines" /> },
  { c: 12, r: 2, label: ["企业微信项目"], art: <Folder /> },
  { c: 0, r: 3, label: ["MATLAB", "R2021b"], art: <Matlab /> },
  { c: 5, r: 3, label: ["202103040...", "黄镕凯-物..."], art: <OfficeDoc /> },
  { c: 7, r: 3, label: ["java"], art: <Folder /> },
  { c: 8, r: 3, label: ["招生提报系统"], art: <Folder inner="sheet" /> },
  { c: 9, r: 3, label: ["daisy_v3"], art: <Folder /> },
  { c: 10, r: 3, label: ["orangestu..."], art: <Folder inner="code" /> },
  { c: 11, r: 3, label: ["hstack"], art: <Folder inner="code" /> },
  { c: 12, r: 3, label: ["企业微信修改", "手机号"], art: <Folder inner="lines" /> },
  { c: 14, r: 3, label: ["hstackServe"], art: <Folder /> },
  { c: 15, r: 3, label: ["关于举办", "2023年第2..."], art: <Folder inner="sheet" /> },
  { c: 2, r: 4, label: ["gitlab"], art: <Folder /> },
  { c: 7, r: 4, label: ["dailyWork...."], art: <CodeFile /> },
  { c: 8, r: 4, label: ["EROS-front..."], art: <CodeFile /> },
  { c: 9, r: 4, label: ["daisy_v3.c..."], art: <CodeFile /> },
  { c: 10, r: 4, label: ["OrangeStu..."], art: <CodeFile /> },
  { c: 11, r: 4, label: ["hstack.cod..."], art: <CodeFile /> },
  { c: 12, r: 4, label: ["新建 文本文", "档 (2).txt"], art: <TextFile /> },
  { c: 7, r: 5, label: ["rooon-k 2.0"], art: <Folder inner="code" /> },
  { c: 9, r: 5, label: ["web_app_..."], art: <Folder inner="page" /> },
  { c: 10, r: 5, label: ["OrangeOA素", "材"], art: <Folder inner="dark" /> },
  { c: 11, r: 5, label: ["go"], art: <Folder /> },
  { c: 12, r: 5, label: ["工大域名证书"], art: <Folder /> },
  { c: 2, r: 6, label: ["gitteach"], art: <Folder inner="fold" /> },
  { c: 7, r: 6, label: ["C"], art: <Folder inner="dev" /> },
  { c: 10, r: 6, label: ["OrangeUI"], art: <Folder inner="code" /> },
  { c: 11, r: 6, label: ["vue-eleme..."], art: <Folder inner="page" /> },
];

const SharedDefs = styled.svg`
  position: absolute;
  width: 0;
  height: 0;
`;

/* ------------------------------------------------------------------ */
/* Dock                                                                */
/* ------------------------------------------------------------------ */

const DockPanel = styled.aside`
  position: absolute;
  left: 3087px;
  top: 57px;
  width: 106px;
  height: 1887px;
  box-sizing: border-box;
  padding-top: 11.5px;
  display: flex;
  flex-direction: column;
  align-items: center;
  gap: 22.15px;
  border: 2px solid rgba(255, 255, 255, 0.16);
  border-radius: 25px;
  background: rgba(255, 255, 255, 0.37);
  box-shadow: 0 0 2px rgba(0, 0, 0, 0.2);
`;

const Tile = styled.div<{ $bg?: string; $flat?: boolean }>`
  position: relative;
  flex: none;
  width: 72px;
  height: 72px;
  border-radius: 17px;
  background: ${(p) => p.$bg || "linear-gradient(#fdfdfd, #d9d9d9)"};
  box-shadow: ${(p) => (p.$flat ? "none" : "0 1px 2px rgba(0, 0, 0, 0.35)")};
  svg { width: 72px; height: 72px; border-radius: 17px; }
`;

const Dot = styled.i`
  position: absolute;
  right: -12px;
  top: 34px;
  width: 4px;
  height: 4px;
  border-radius: 50%;
  background: #222;
`;

const Divider = styled.hr<{ $top: number; $bottom: number }>`
  flex: none;
  width: 87px;
  height: 1.5px;
  border: 0;
  margin: ${(p) => p.$top}px 0 ${(p) => p.$bottom}px;
  background: rgba(70, 30, 90, 0.6);
`;

const WechatMark = () => (
  <>
    <ellipse cx="27.600" cy="28.500" rx="20.800" ry="17" fill="url(#wxG)" />
    <path d="M15,41 14,50 24,44Z" fill="#0fd66a" />
    <ellipse cx="20.700" cy="24.300" rx="2.900" ry="3" fill="#0c8a45" /><ellipse cx="34.800" cy="24.300" rx="2.900" ry="3" fill="#0c8a45" />
    <path d="M53,55 60,59.500 58,52Z" fill="#e8e8e8" />
    <ellipse cx="47.500" cy="42.800" rx="17.400" ry="15" fill="#ececec" stroke="#cfcfcf" strokeWidth=".5" />
    <circle cx="41.300" cy="38.500" r="2.400" fill="#8d8d8d" /><circle cx="53.200" cy="38.500" r="2.400" fill="#8d8d8d" />
  </>
);

const QQMark = () => (
  <>
    <ellipse cx="26" cy="63.500" rx="9" ry="3.300" fill="#f7a400" /><ellipse cx="46" cy="63.500" rx="9" ry="3.300" fill="#f7a400" />
    <path d="M36,6C26,6 20.500,13.500 20.500,23V31C15,38 10.500,48 11,54C11.500,58 16,54 18,50.500C20,60 27,65 36,65C45,65 52,60 54,50.500C56,54 60.500,58 61,54C61.500,48 57,38 51.500,31V23C51.500,13.500 46,6 36,6Z" />
    <path d="M21,44C21,36 27,35 36,35C45,35 51,36 51,44C51,56 45,62 36,62C27,62 21,56 21,44Z" fill="#fff" />
    <path d="M17.500,31Q36,41 55,31L56.500,38Q36,47 16,38Z" fill="#e81b23" /><path d="M24.500,40H32.500V49H24.500Z" fill="#e81b23" />
    <ellipse cx="36" cy="28" rx="11" ry="3.600" fill="#f7a400" />
    <ellipse cx="31.300" cy="19" rx="3.800" ry="4.800" fill="#fff" /><ellipse cx="40.700" cy="19" rx="3.800" ry="4.800" fill="#fff" />
    <circle cx="32.500" cy="19.500" r="1.500" /><path d="M38.500,19.500Q40.500,17.500 43,19.500" fill="none" stroke="#000" strokeWidth="1.200" />
  </>
);

const SteamMark = () => (
  <>
    <circle cx="36" cy="36" r="27.500" fill="url(#steamG)" />
    <path d="M8.500,36C8.300,35 8.500,35 8.800,34L24,39L37,31C36,24 40,19.500 46.500,19.500C52,19.500 56,24 56,29.500C56,36 51,40 45.500,39.500L34,48C33,52 30,54 26.500,53.500C22.500,53 21,50 20,48L10.500,44.500Z" fill="#fff" />
    <circle cx="46" cy="29.500" r="6.700" fill="none" stroke="#14365f" strokeWidth="1.600" />
    <path d="M24,50.500A4.800,4.800 0 1 0 26,41.500" fill="none" stroke="#14638f" strokeWidth="1.500" />
  </>
);

const pads = [
  ["#86e85a", "#22c32a"], ["#f9c816", "#f6a410"], ["#f39a09", "#e8711a"],
  ["#ef3a2c", "#bb0808"], ["#c3cfd6", "#7c7c7c"], ["#fb3757", "#ec4d5b"],
  ["#a95ae0", "#7d2db2"], ["#19c3f7", "#1d5fe6"], ["#58dfb9", "#14b183"],
];

type App = { name: string; running?: boolean; bg?: string; flat?: boolean; art: React.ReactNode };

const upper: App[] = [
  {
    name: "finder", running: true,
    art: (
      <>
        <rect width="72" height="72" fill="url(#finL)" />
        <path d="M36.500,0H72V72H42.500Q39,58 38.500,41.600H28.500Q26,41.600 27.500,37Q30,16 36.500,0Z" fill="url(#finR)" />
        <path d="M18.700,22.500V27M50.500,22.500V27" stroke="#31383f" strokeWidth="3" strokeLinecap="round" />
        <path d="M13.500,48Q35,66 56.500,48" fill="none" stroke="#20242a" strokeWidth="2.200" strokeLinecap="round" />
      </>
    ),
  },
  {
    name: "launchpad", bg: "rgba(245,238,243,.72)", flat: true,
    art: pads.map(([a, b], i) => {
      const x = 11.5 + (i % 3) * 17.4;
      const y = 12 + Math.floor(i / 3) * 17.4;
      return (
        <g key={i}>
          <linearGradient id={`pad${i}`} x2="0" y2="1"><stop stopColor={a} /><stop offset="1" stopColor={b} /></linearGradient>
          <rect x={x} y={y} width="13.600" height="13.400" rx="3" fill={`url(#pad${i})`} />
        </g>
      );
    }),
  },
  { name: "wechat", running: true, art: <WechatMark /> },
  { name: "qq", running: true, bg: "#fff", art: <QQMark /> },
  {
    name: "typora", bg: "#f1f1f1",
    art: (
      <>
        <path d="M3,8Q3,0 16,0H72V69H20Q3,69 3,54Z" fill="#fdfdfd" stroke="#d4d4d4" strokeWidth=".8" />
        <path d="M12,17.500H60M12,24.500H60M12,31.500H60M12,38.500H60M12,45.500H60M12,52.500H60" stroke="#e6e6e6" strokeWidth="2.200" />
        <path d="M19,14H56V28H44V57H31V28H19Z" fill="#fdfdfd" />
        <text x="37.500" y="54.500" textAnchor="middle" fontSize="60" fontWeight="700" textLength="35" lengthAdjust="spacingAndGlyphs" fontFamily="Liberation Serif, serif" fill="#2b2b2b">T</text>
      </>
    ),
  },
  {
    name: "lark",
    art: (
      <>
        <path d="M16,13H44Q50,17 52,26Q42,29 36,36Q29,22 16,13Z" fill="#00d6b9" />
        <path d="M7,26C20,38 34,44 46,42L60,34C52,50 40,60 25,60Q13,60 7,53Z" fill="#3370ff" />
        <path d="M30,42C38,35 44,24 64.500,28C58,34 58,46 46,47Q38,47 30,42Z" fill="#133c9a" />
      </>
    ),
  },
  {
    name: "filezilla", running: true, bg: "transparent", flat: true,
    art: (
      <>
        <rect x="1" y="1" width="70" height="70" rx="16" fill="url(#fz)" />
        <rect x=".8" y=".8" width="70.400" height="70.400" rx="16" fill="none" stroke="#d79ab8" strokeWidth="2" strokeDasharray="2.600 5.200" />
        <text x="9" y="56" fontSize="56" fontWeight="700" fontStyle="italic" textLength="52" lengthAdjust="spacingAndGlyphs" fontFamily="Liberation Sans, sans-serif" fill="#fff" stroke="#fff" strokeWidth="1.400">Fz</text>
      </>
    ),
  },
  {
    name: "sourcetree",
    art: (
      <>
        <circle cx="36" cy="36" r="25.500" fill="url(#st)" />
        <circle cx="36" cy="34" r="7.400" fill="none" stroke="#fff" strokeWidth="7.400" />
        <path d="M39.500,44Q46,42 47,34L40,35Z" fill="#1a63e8" opacity=".45" />
        <path d="M32.500,41H39.500V50H32.500Z" fill="#fff" />
      </>
    ),
  },
  {
    name: "terminal",
    art: (
      <>
        <path d="M18,30 26,35 38,32 44,36 55,44 26,60 18,56 40,46Z" fill="#173c46" />
        <path d="M17.600,16.500 38,31V40L17.600,27.500ZM17.600,43 26,49 54.700,32V40L26,54.500 17.600,51Z" fill="#6d97b8" />
        <path d="M17.600,17 25.600,13.500 54.700,31V39L27,52 17.600,43.500 38,33.500Z" fill="url(#arrow)" />
        <path d="M17.600,17 38,32.500 34,35 17.600,26Z" fill="#6f9cc0" /><path d="M17.600,43.500 27,47.500V54.500L17.600,51Z" fill="#6a8fb4" />
        <path d="M27,47.500 54.700,32.500V39.500L27,54.500Z" fill="#64c1c6" />
      </>
    ),
  },
  {
    name: "hexfox",
    art: (
      <>
        <path d="M34,8.500Q36,7.500 38,8.500L59,19.500Q61,21 61,23V48.500Q61,51 59,52L38,63Q36,64 34,63L13,52Q11,51 11,48.500V23Q11,21 13,19.500Z" fill="url(#hex)" />
        <path d="M28,20C21,25 19,30 19,35C19,40 22,44 27,47L25,47C32,52 41,52 47,47L51,44L49,44C53,38 54,28 45,20C46,27 42,33 36.500,33C30,33 27,27 28,20Z" fill="#fff" />
        <path d="M41,37 43,39 45,37 47,40 49,38 52,41" fill="none" stroke="#f9465f" strokeWidth="1.400" />
      </>
    ),
  },
  { name: "vscode", running: true, art: <VsMark /> },
  { name: "chrome", art: <ChromeMark /> },
  {
    name: "rocket",
    art: (
      <>
        <path d="M20,34Q14,40 18,50M52,34Q58,40 54,50" fill="none" stroke="#9c8e72" strokeWidth="3.600" />
        <path d="M26,48Q19,46 18.500,51Q19,56 25,54M46,48Q53,46 53.500,51Q53,56 47,54" fill="none" stroke="#2b9a3c" strokeWidth="3" />
        <path d="M36,8C42,13 51,20 51,30C51,40 46,47 42,52H30C26,47 21,40 21,30C21,20 30,13 36,8Z" fill="#3b9d3e" />
        <path d="M30,50H42L40,54.500H32Z" fill="#2c7a2d" />
        <ellipse cx="36" cy="31" rx="6.500" ry="7" fill="#2a7a3a" /><ellipse cx="36" cy="31" rx="5" ry="5.300" fill="#7fe0a2" /><ellipse cx="35" cy="29.500" rx="2.400" ry="2.400" fill="#d4fbe0" />
        <path d="M31,42.500H41" stroke="#226c28" strokeWidth="3" strokeDasharray="1.400 .7" />
        <rect x="24.500" y="61.500" width="23" height="1.800" rx=".9" fill="#8d8d8d" />
      </>
    ),
  },
  {
    name: "cat",
    art: (
      <>
        <path d="M27,17 33,23H41L46,17 50,24 53.500,54H22L26,24Z" fill="url(#cat)" />
        <path d="M24,52.500Q14.500,53 15,47.500Q15.500,44 19,44.500" fill="none" stroke="#1c3a63" strokeWidth="2.600" strokeLinecap="round" />
        <circle cx="31" cy="31.500" r="2" fill="#fff" /><circle cx="45" cy="31.500" r="2" fill="#fff" /><path d="M36,36 38,37 40,36" stroke="#b98ea0" fill="none" strokeWidth="1" />
      </>
    ),
  },
  {
    name: "idea",
    art: (
      <>
        <path d="M16,8 36,8 40,20 20,40 7,29 13,22Z" fill="#fb8a2c" /><path d="M24,7 36,8 42,22 20,26Z" fill="#f8339a" />
        <path d="M7,29 20,22V44L8,40Z" fill="#f4277b" /><path d="M10,34 20,36 18,48 9,42Z" fill="#fd9318" />
        <path d="M18,44 36,52 30,56 12,63Z" fill="#f7358f" /><path d="M18,44 40,56 44,64 32,58Z" fill="#8b45e6" />
        <path d="M38,16 47,8 58,14 64.500,24 62,52 42,64 34,54Z" fill="#1592f0" /><path d="M47,8 58,14 54,24 38,16Z" fill="#22c0f5" /><path d="M54,54 64.500,24 62,54 46,63Z" fill="#15d0ee" />
        <rect x="18" y="18" width="36" height="36" fill="#0e0509" />
        <text x="21.500" y="36.500" fontSize="17" fontWeight="700" fontFamily="Liberation Mono, monospace" fill="#fff" stroke="#fff" strokeWidth=".5">IJ</text>
        <rect x="22" y="47" width="14" height="2.500" fill="#fff" />
      </>
    ),
  },
];

const middle: App[] = [
  {
    name: "wps", running: true,
    art: (
      <>
        <path d="M10,18.500H32L28,25H18.500L26.500,43L40,18.500H62Q66,18.500 64,22.500L48,54Q46,57 43,54L37.500,44L41,36.500L45.500,45L56,25.500H47L29,54Q26,57 23.500,54L7.500,23Q6,18.500 10,18.500Z" fill="url(#wps)" />
        <path d="M40,18.500H50L46,26L38,39L33,31.500Z" fill="#f7762b" />
      </>
    ),
  },
  { name: "steam", running: true, art: <g transform="translate(1,0)"><SteamMark /></g> },
  {
    name: "git", running: true,
    art: (
      <>
        <g transform="translate(36,36.300) rotate(45)">
          <rect x="-21" y="-21" width="20.200" height="20.200" rx="2" fill="#f97c7c" />
          <rect x=".8" y="-21" width="20.200" height="20.200" rx="2" fill="#8ccf63" />
          <rect x="-21" y=".8" width="20.200" height="20.200" rx="2" fill="#80b1ff" />
          <rect x=".8" y=".8" width="20.200" height="20.200" rx="2" fill="#ffe07e" />
        </g>
        <path d="M25,18 37,30M37,30V48M37,28 47,37" stroke="#dcdcdc" strokeWidth="4" strokeLinecap="round" />
        <circle cx="36.500" cy="48.500" r="4.400" fill="#d8d8d8" /><circle cx="48" cy="37" r="4.200" fill="#dcdcdc" /><circle cx="37" cy="29" r="4.200" fill="#e4e4e4" />
      </>
    ),
  },
];

const Trash = styled.svg`
  flex: none;
  width: 64px;
  height: 84px;
`;

const AppTile = ({ app }: { app: App }) => (
  <Tile $bg={app.bg} $flat={app.flat}>
    <svg viewBox="0 0 72 72">{app.art}</svg>
    {app.running && <Dot />}
  </Tile>
);

const Grad = ({ id, a, b, h }: { id: string; a: string; b: string; h?: boolean }) => (
  <linearGradient id={id} x1="0" y1="0" x2={h ? 1 : 0} y2="1"><stop stopColor={a} /><stop offset="1" stopColor={b} /></linearGradient>
);

export default function App() {
  return (
    <Screen>
      <GlobalStyle />
      <SharedDefs>
        <defs>
          <Grad id="fTab" a="#fdbf1f" b="#f0ac17" />
          <Grad id="fBack" a="#fce29a" b="#e8c272" h />
          <Grad id="fFront" a="#ffe69b" b="#ffc93a" h />
          <Grad id="paper" a="#fbfbfb" b="#f0f2f3" h />
          <Grad id="wxG" a="#55ea7d" b="#07cf5f" />
          <Grad id="steamG" a="#131a3a" b="#0b7cb4" />
          <Grad id="finL" a="#1ad4fd" b="#1b5ff0" />
          <Grad id="finR" a="#f1f2f5" b="#cbd7e5" />
          <Grad id="fz" a="#c90000" b="#850000" />
          <Grad id="st" a="#0a63fb" b="#0450c8" />
          <Grad id="arrow" a="#a7e2ea" b="#84d6d8" h />
          <Grad id="hex" a="#fb3266" b="#f3574a" h />
          <Grad id="cat" a="#1f4676" b="#142b4e" />
          <Grad id="wps" a="#f5212c" b="#fe5309" />
          <Grad id="bucket" a="#e6e5e6" b="#d0cfd0" />
          <linearGradient id="matlab" x1="0" y1=".2" x2="1" y2=".5">
            <stop offset=".05" stopColor="#8d1c15" /><stop offset=".35" stopColor="#c84a1c" /><stop offset=".55" stopColor="#ee8427" /><stop offset=".72" stopColor="#e26428" /><stop offset="1" stopColor="#a82517" />
          </linearGradient>
        </defs>
      </SharedDefs>
      <Wallpaper />

      <Bar>
        <FaApple size={29} />
        <Menus>
          <MenuItem $bold>资源管理器</MenuItem>
          <MenuItem>文件</MenuItem>
          <MenuItem>查看</MenuItem>
          <MenuItem>排序方式</MenuItem>
          <MenuItem>刷新</MenuItem>
          <MenuItem>窗口</MenuItem>
        </Menus>
        <StatusArea />
      </Bar>

      <Grid>
        {entries.map((e) => (
          <Cell key={`${e.c}-${e.r}`} $c={e.c} $r={e.r}>
            {e.art}
            <Label>
              {e.label.map((l) => (
                <span key={l}>{l}</span>
              ))}
            </Label>
          </Cell>
        ))}
      </Grid>

      <SelectionFrame />

      <DockPanel>
        {upper.map((a) => <AppTile key={a.name} app={a} />)}
        <Divider $top={12} $bottom={10.5} />
        {middle.map((a) => <AppTile key={a.name} app={a} />)}
        <Divider $top={13} $bottom={3} />
        <Trash viewBox="0 0 64 84">
          <path d="M1,8 10,3 22,0 34,5 44,1 56,5 63,8 58,20H5Z" fill="#cfd0d4" />
          <path d="M8,10 20,4 28,12 18,16ZM34,6 46,6 54,14 38,16Z" fill="#4a4640" /><path d="M16,8 28,6 30,11 20,13Z" fill="#4fc3c9" /><path d="M40,8 48,12 42,16Z" fill="#b5623a" />
          <path d="M10,5 24,2 20,7ZM38,3 50,8 42,9ZM48,6 60,8 56,14Z" fill="#fff" />
          <path d="M.5,8Q32,24 63.500,8L55,76Q53,84 32,84Q11,84 9,76Z" fill="url(#bucket)" />
          <path d="M.5,8Q32,24 63.500,8" fill="none" stroke="#fff" strokeWidth="1.600" />
          <path d="M14,30Q32,38 50,24M16,54Q34,46 46,58" fill="none" stroke="#fff" strokeOpacity=".22" strokeWidth="7" />
          <path d="M9,74Q12,80 32,80Q52,80 55,74" fill="none" stroke="#fff" strokeWidth="2.400" />
        </Trash>
      </DockPanel>
    </Screen>
  );
}
